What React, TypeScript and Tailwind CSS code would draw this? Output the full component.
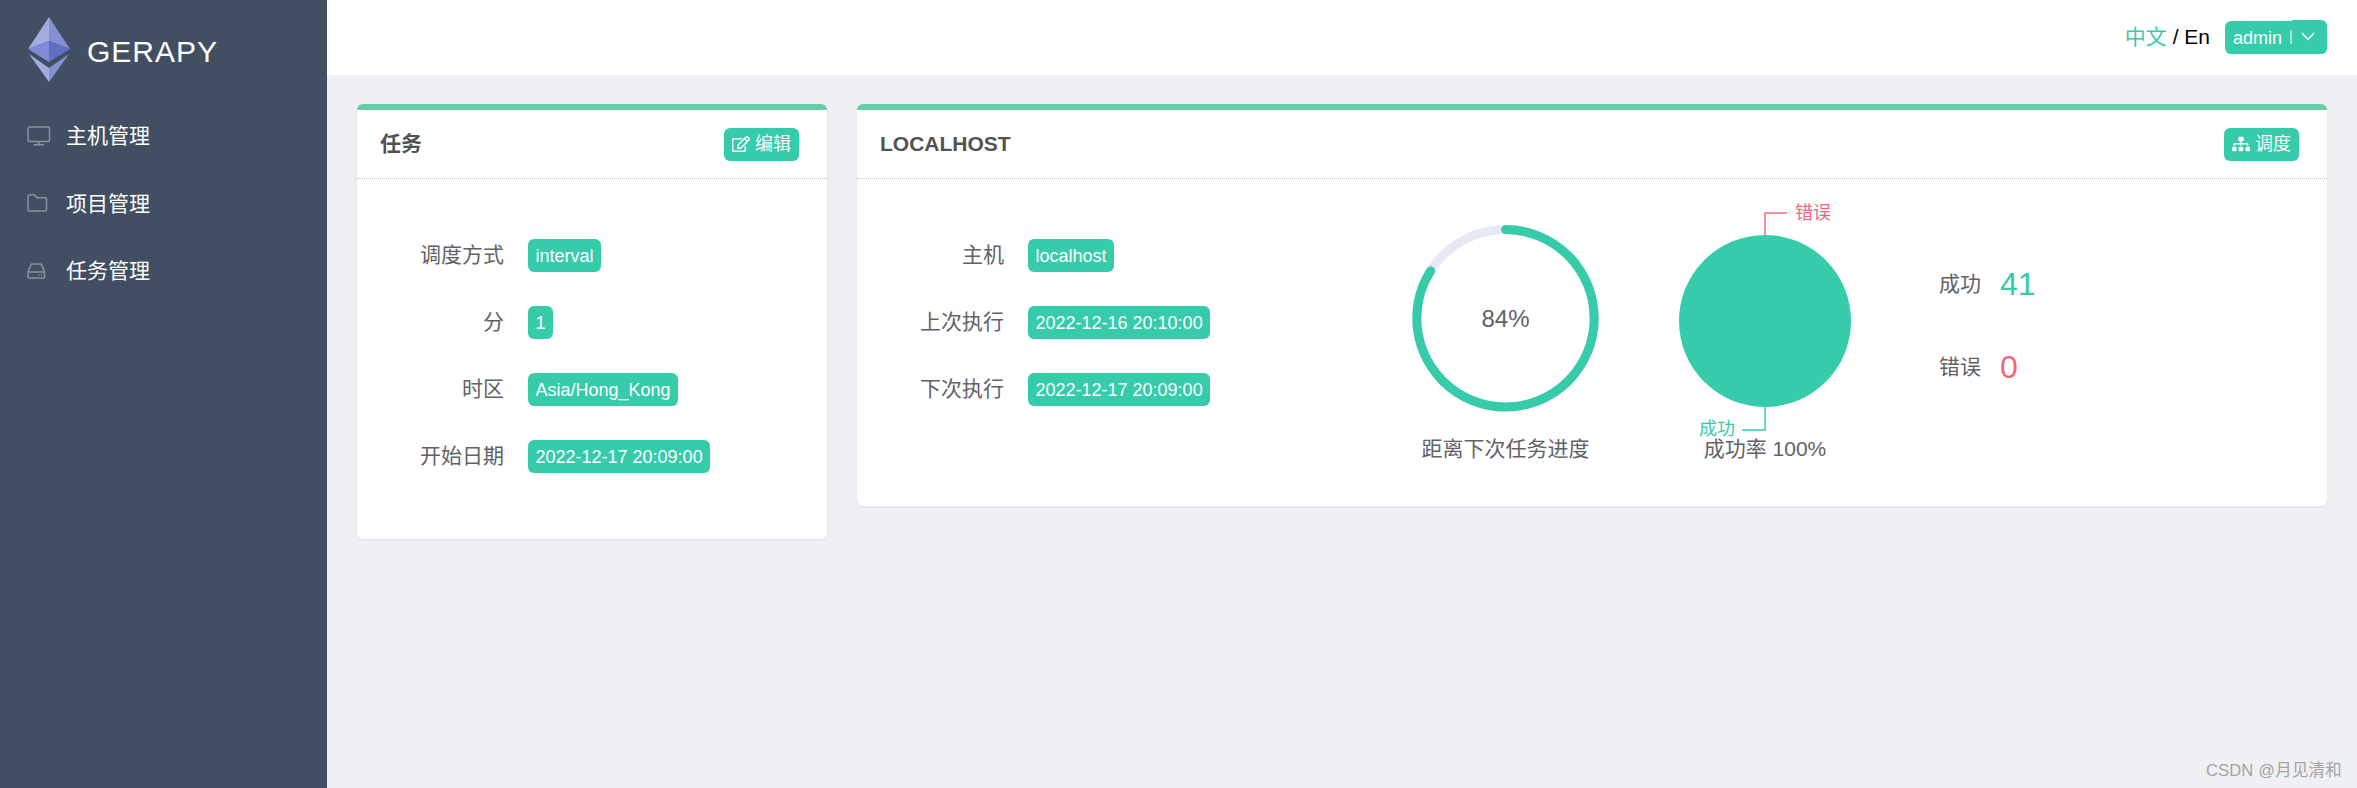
import React from "react";
import { FaRegEdit, FaSitemap } from "react-icons/fa";

function Logo() {
  return (
    <svg width="44" height="68" viewBox="27 16 44 68" className="shrink-0">
      <polygon points="49,17 28,49 49,41" fill="#a2ace0" />
      <polygon points="49,17 70,49 49,41" fill="#8590d3" />
      <polygon points="28,49 49,41 49,62" fill="#7f8bd2" />
      <polygon points="70,49 49,41 49,62" fill="#606fc6" />
      <polygon points="29,54 49,68 49,82" fill="#a2ace0" />
      <polygon points="69,54 49,68 49,82" fill="#8590d3" />
    </svg>
  );
}

function MonitorIcon() {
  return (
    <svg width="24" height="20" viewBox="0 0 24 20" fill="none" stroke="#8c939d" strokeWidth="1.5">
      <rect x="1" y="1" width="21.5" height="14.5" rx="1.5" />
      <path d="M11.7 15.5v3M6.5 18.7h10.5" />
    </svg>
  );
}

function FolderIcon() {
  return (
    <svg width="24" height="18" viewBox="0 0 24 18" fill="none" stroke="#8c939d" strokeWidth="1.5">
      <path d="M1 2.2C1 1.500 1.500 1 2.200 1H7.500L10 3.800H18.200C19 3.800 19.500 4.300 19.500 5V15.800C19.500 16.500 19 17 18.200 17H2.200C1.500 17 1 16.500 1 15.800Z" />
    </svg>
  );
}

function DriveIcon() {
  return (
    <svg width="24" height="16" viewBox="0 0 24 16" fill="none" stroke="#8c939d" strokeWidth="1.5">
      <path d="M1 9L4 1.800C4.200 1.200 4.700 1 5.200 1H13.300C13.800 1 14.300 1.200 14.500 1.800L17.500 9" />
      <rect x="1" y="9" width="16.500" height="6" rx="1" />
      <path d="M11.500 12h1M14 12h1" />
    </svg>
  );
}

function MenuItem({ icon, label }: { icon: React.ReactNode; label: string }) {
  return (
    <div className="flex h-[67.500px] items-center pl-[27px] text-[21px] text-white">
      <span className="flex w-[39px] items-center">{icon}</span>
      <span>{label}</span>
    </div>
  );
}

function Tag({ children }: { children: React.ReactNode }) {
  return (
    <span className="inline-flex h-[33px] items-center rounded-[6px] bg-[#36cbaa] px-[7.500px] text-[18px] leading-none whitespace-nowrap text-white">
      {children}
    </span>
  );
}

function Row({ label, value }: { label: string; value: string }) {
  return (
    <div className="flex h-[33px] items-center">
      <span className="w-[147px] pb-[2px] text-right text-[21px] text-[#606266]">{label}</span>
      <span className="ml-[24px]">
        <Tag>{value}</Tag>
      </span>
    </div>
  );
}

function ActionButton({ icon, label }: { icon: React.ReactNode; label: string }) {
  return (
    <button className="flex h-[33px] w-[75px] items-center gap-[5px] rounded-[6px] bg-[#36cbaa] px-[8px] text-[18px] leading-none text-white">
      {icon}
      <span>{label}</span>
    </button>
  );
}

function CardHeader({ title, action }: { title: string; action: React.ReactNode }) {
  return (
    <div className="flex h-[69px] items-center justify-between border-b border-dotted border-[#c4c4c4] pr-[28px] pl-[23px]">
      <span className="-mt-[1px] text-[21px] font-bold text-[#535351]">{title}</span>
      {action}
    </div>
  );
}

function Ring() {
  return (
    <svg width="297" height="237" viewBox="0 0 297 237">
      <circle cx="148.500" cy="118.300" r="88.700" fill="none" stroke="#e5e9f2" strokeWidth="9" />
      <circle
        cx="148.500"
        cy="118.300"
        r="88.700"
        fill="none"
        stroke="#36cbaa"
        strokeWidth="9"
        strokeLinecap="round"
        pathLength={100}
        strokeDasharray="84 100"
        transform="rotate(-90 148.500 118.300)"
      />
      <text x="148.500" y="127" textAnchor="middle" fontSize="24" fill="#606266">
        84%
      </text>
    </svg>
  );
}

function Pie() {
  return (
    <svg width="222" height="237" viewBox="0 0 222 237" className="overflow-visible">
      <path d="M133 13H111V36" fill="none" stroke="#f4667a" strokeWidth="1.500" />
      <path d="M88 230H111V206" fill="none" stroke="#36cbaa" strokeWidth="1.500" />
      <circle cx="111" cy="121" r="86" fill="#36cbaa" />
      <text x="141" y="18.500" fontSize="18" fill="#f4667a">
        错误
      </text>
      <text x="45" y="235" fontSize="18" fill="#36cbaa">
        成功
      </text>
    </svg>
  );
}

export default function App() {
  return (
    <div className="relative flex h-screen overflow-hidden bg-[#eff0f4] [font-family:'Liberation_Sans','Noto_Sans_CJK_SC',sans-serif]">
      <aside className="w-[327px] shrink-0 bg-[#424f63]">
        <div className="flex h-[102px] items-start pt-[16px] pl-[27px]">
          <Logo />
          <span className="mt-[18px] ml-[16px] text-[30px] leading-[36px] font-light tracking-[1px] text-white">GERAPY</span>
        </div>
        <MenuItem icon={<MonitorIcon />} label="主机管理" />
        <MenuItem icon={<FolderIcon />} label="项目管理" />
        <MenuItem icon={<DriveIcon />} label="任务管理" />
      </aside>

      <div className="flex min-w-0 flex-1 flex-col">
        <header className="flex h-[75px] shrink-0 items-center justify-end bg-white pr-[30px] pb-[1px]">
          <span className="text-[21px] text-black">
            <span className="text-[#36cbaa]">中文</span> / En
          </span>
          <div className="ml-[15px] flex h-[33px] w-[102px] items-center rounded-[6px] bg-[#36cbaa] pl-[8px] text-[18px] leading-none text-white">
            <span className="pt-[1px]">admin</span>
            <span className="ml-[8px] h-[14px] w-[2px] bg-[#9ce5d5]" />
            <span className="-mt-[1px] flex h-[34px] flex-1 items-center justify-center rounded-tr-[6px] rounded-br-[6px] bg-[#36cbaa] pr-[4px]">
              <svg width="14" height="9" viewBox="0 0 14 9" fill="none" stroke="white" strokeWidth="1.300">
                <path d="M1 1l6 6.500L13 1" />
              </svg>
            </span>
          </div>
        </header>

        <main className="flex items-start gap-[30px] pt-[29px] pr-[30px] pl-[30px]">
          <section className="w-[470px] shrink-0 overflow-hidden rounded-[6px] border-t-[6px] border-[#65cea7] bg-white shadow-[0_1px_3px_rgba(0,0,0,0.07)]">
            <CardHeader title="任务" action={<ActionButton icon={<FaRegEdit size={18} />} label="编辑" />} />
            <div className="flex flex-col gap-[34px] pt-[60px] pb-[66px]">
              <Row label="调度方式" value="interval" />
              <Row label="分" value="1" />
              <Row label="时区" value="Asia/Hong_Kong" />
              <Row label="开始日期" value="2022-12-17 20:09:00" />
            </div>
          </section>

          <section className="min-w-0 flex-1 overflow-hidden rounded-[6px] border-t-[6px] border-[#65cea7] bg-white shadow-[0_1px_3px_rgba(0,0,0,0.07)]">
            <CardHeader title="LOCALHOST" action={<ActionButton icon={<FaSitemap size={18} />} label="调度" />} />
            <div className="flex h-[327px] pt-[21px]">
              <div className="flex w-[500px] shrink-0 flex-col gap-[34px] pt-[39px]">
                <Row label="主机" value="localhost" />
                <Row label="上次执行" value="2022-12-16 20:10:00" />
                <Row label="下次执行" value="2022-12-17 20:09:00" />
              </div>
              <div className="flex w-[297px] shrink-0 flex-col items-center">
                <Ring />
                <span className="text-[21px] leading-[24px] text-[#606266]">距离下次任务进度</span>
              </div>
              <div className="flex w-[222px] shrink-0 flex-col items-center">
                <Pie />
                <span className="text-[21px] leading-[24px] text-[#606266]">成功率 100%</span>
              </div>
              <div className="flex flex-col gap-[47px] pt-[66px] pl-[63px]">
                <div className="flex h-[36px] items-center gap-[19px]">
                  <span className="text-[21px] text-[#606266]">成功</span>
                  <span className="text-[32px] leading-none text-[#36cbaa]">41</span>
                </div>
                <div className="flex h-[36px] items-center gap-[19px]">
                  <span className="text-[21px] text-[#606266]">错误</span>
                  <span className="text-[32px] leading-none text-[#f4667a]">0</span>
                </div>
              </div>
            </div>
          </section>
        </main>
      </div>

      <span className="absolute right-[15px] bottom-[5px] text-[16.500px] tracking-[0.2px] text-[#a3a3a3]">CSDN @月见清和</span>
    </div>
  );
}
